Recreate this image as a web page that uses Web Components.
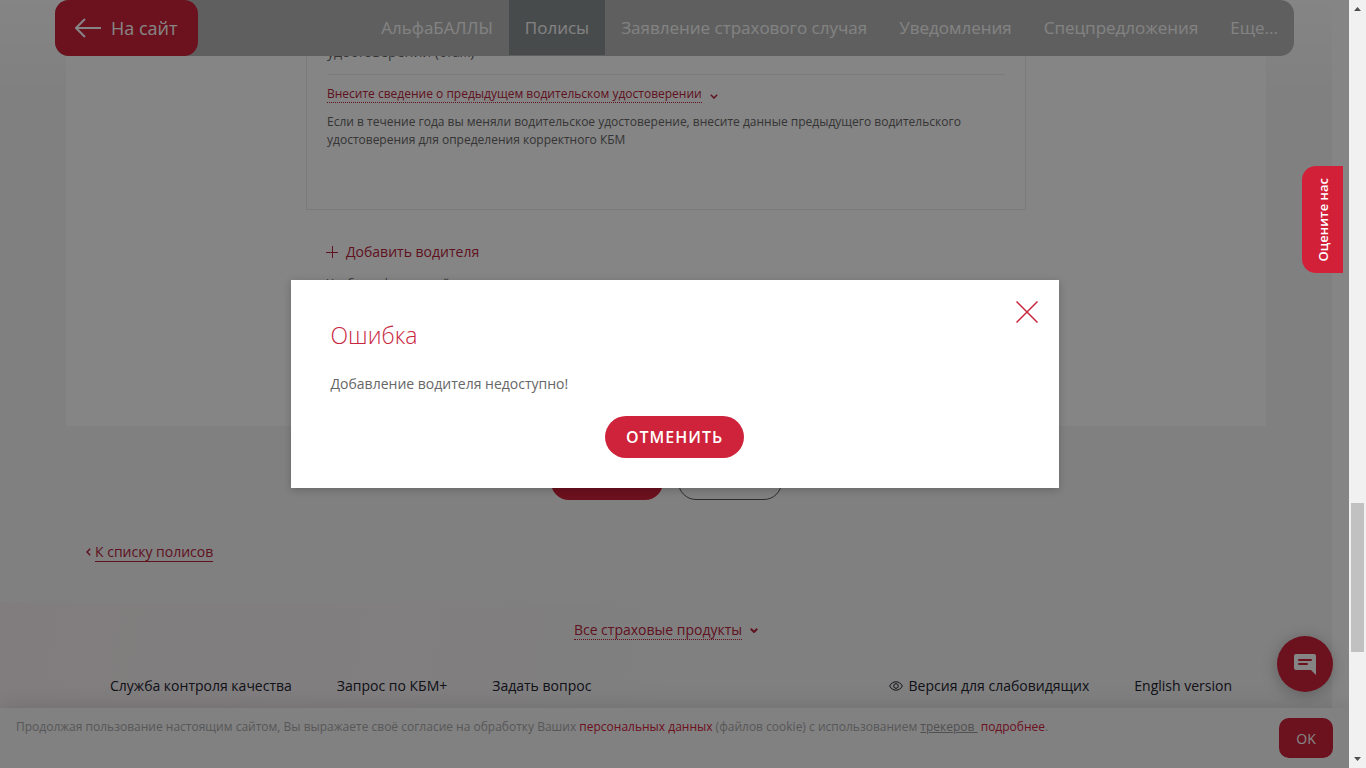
<!DOCTYPE html>
<html lang="ru">
<head>
<meta charset="utf-8">
<title>Мои полисы</title>
<style>
html, body { margin: 0; height: 100%; }
body { font-family: "Open Sans", "Noto Sans", sans-serif; font-size: 14px; color: #666; overflow: hidden;
  --brand: #d0213a; --link: #b8243c; }
</style>
</head>
<body>
<app-shell>
  <site-header slot="header">
    <nav-item>АльфаБАЛЛЫ</nav-item>
    <nav-item active>Полисы</nav-item>
    <nav-item>Заявление страхового случая</nav-item>
    <nav-item>Уведомления</nav-item>
    <nav-item>Спецпредложения</nav-item>
    <nav-item>Еще...</nav-item>
  </site-header>
  <policy-form></policy-form>
  <site-footer></site-footer>
  <cookie-bar slot="bottom"></cookie-bar>
  <chat-button slot="chat"></chat-button>
  <rate-tab slot="tab">Оцените нас</rate-tab>
  <modal-dialog slot="modal" heading="Ошибка" action="ОТМЕНИТЬ">Добавление водителя недоступно!</modal-dialog>
  <page-scrollbar slot="scroll"></page-scrollbar>
</app-shell>
<script>
const base = `<style>
:host, * { box-sizing: border-box; }
button { font: inherit; border: 0; margin: 0; padding: 0; cursor: pointer; }
a { text-decoration: none; }
svg { flex: none; }
</style>`;
const define = (name, html, setup) => customElements.define(name, class extends HTMLElement {
  constructor() {
    super();
    this.attachShadow({ mode: 'open' }).innerHTML = base + html;
  }
  connectedCallback() { if (setup) setup(this, this.shadowRoot); }
});

define('app-shell', `
<style>
:host { display: grid; grid-template-columns: minmax(0, 1fr) 17px; height: 100vh; }
.view { position: relative; overflow: hidden; background: #fff; }
.page { margin-right: 17px; min-height: 100%; background: linear-gradient(#fff, #f5f5f5 100px); }
.top { position: absolute; top: 0; left: 55px; right: 55px; }
.bottom { position: absolute; left: 0; right: 0; bottom: 0; }
.chat { position: absolute; right: 16px; bottom: 76px; }
.shade { position: absolute; inset: 0; background: rgba(0, 0, 0, .48); }
.tab { position: absolute; right: 6px; top: 166px; }
.modal { position: absolute; inset: 0; display: grid; place-items: center; pointer-events: none; }
</style>
<div class="view">
  <main class="page"><slot></slot></main>
  <div class="top"><slot name="header"></slot></div>
  <div class="bottom"><slot name="bottom"></slot></div>
  <div class="chat"><slot name="chat"></slot></div>
  <div class="shade"></div>
  <div class="modal"><slot name="modal"></slot></div>
  <div class="tab"><slot name="tab"></slot></div>
</div>
<slot name="scroll"></slot>`);

define('site-header', `
<style>
:host { display: flex; justify-content: space-between; height: 56px; border-radius: 14px; background: #b7b7b7; font-size: 17px; }
a { display: flex; align-items: center; gap: 10px; padding: 0 20px; width: 143px; border-radius: 14px; background: var(--brand); color: #fff; font-size: 18px; white-space: nowrap; }
nav { display: flex; }
</style>
<a href="#"><svg width="26" height="20" viewBox="0 0 26 20" fill="none" stroke="#fff" stroke-width="2"><path d="M10 1L1 10l9 9M1 10h25"/></svg>На сайт</a>
<nav><slot></slot></nav>`);

define('nav-item', `
<style>
:host { display: block; height: 55px; font-weight: 500; }
:host([active]) { background: #8a9193; }
a { display: flex; align-items: center; height: 100%; padding: 0 16px; color: #fafafa; white-space: nowrap; }
</style>
<a href="#"><slot></slot></a>`);

define('policy-form', `
<style>
:host { display: block; }
.panel { max-width: 1200px; height: 426px; margin: 0 auto; background: #fff; }
.card { max-width: 720px; height: 210px; margin: 0 auto; padding: 40px 20px 0; border: 1px solid #ebebeb; border-top: 0; }
.field { height: 35px; border-bottom: 1px solid #ebebeb; line-height: 24px; }
.more { display: flex; align-items: center; gap: 8px; margin-top: 10px; font-size: 12px; line-height: 17px; }
.more svg { margin-top: 4px; }
.more a { color: var(--link); border-bottom: 1px dotted; }
p { margin: 10px 0 0; font-size: 12px; line-height: 18px; }
.add { max-width: 720px; margin: 31px auto 0; padding-left: 20px; }
.add button { display: flex; align-items: center; gap: 8px; background: none; color: var(--link); line-height: 22px; }
.add p { margin-top: 12px; }
.actions { display: flex; justify-content: center; gap: 15px; margin-top: 38px; }
.actions button { width: 112px; height: 36px; border-radius: 18px; background: var(--brand); }
.actions .ghost { width: 104px; background: none; border: 1px solid #555; }
.back { display: flex; align-items: center; gap: 4px; margin: 42px auto 41px; max-width: 1160px; }
.back a { color: var(--link); border-bottom: 1px solid; line-height: 19px; }
</style>
<section class="panel">
  <div class="card">
    <div class="field">удостоверении (стаж)</div>
    <div class="more"><a href="#">Внесите сведение о предыдущем водительском удостоверении</a>
      <svg width="8" height="5" viewBox="0 0 8 5" fill="none" stroke="#b8243c" stroke-width="1.5"><path d="M.8 .8L4 4 7.200 .8"/></svg></div>
    <p>Если в течение года вы меняли водительское удостоверение, внесите данные предыдущего водительского удостоверения для определения корректного КБМ</p>
  </div>
  <div class="add">
    <button type="button"><svg width="12" height="12" viewBox="0 0 12 12" stroke="#b8243c"><path d="M0 6.500h12M6.500 0v12"/></svg>Добавить водителя</button>
    <p>Чтобы информацией</p>
  </div>
</section>
<div class="actions"><button type="button" aria-label="Далее"></button><button type="button" class="ghost" aria-label="Назад"></button></div>
<div class="back"><svg width="5" height="8" viewBox="0 0 5 8" fill="none" stroke="#b8243c" stroke-width="1.5"><path d="M4.200 .8L1 4l3.200 3.200"/></svg><a href="#">К списку полисов</a></div>`);

define('site-footer', `
<style>
:host { display: block; height: 165px; padding-top: 17px; background: linear-gradient(100deg, #f8f0f2, #f6f5f5 50%, #f5f5f5); }
.all { display: flex; justify-content: center; align-items: center; gap: 8px; }
.all a { color: var(--link); border-bottom: 1px dotted; line-height: 19px; }
.links { display: flex; align-items: center; gap: 45px; max-width: 1132px; margin: 35px auto 0; padding-left: 10px; line-height: 22px; }
.links a { display: flex; align-items: center; gap: 6px; color: #222230; white-space: nowrap; }
.right { display: flex; gap: 45px; margin-left: auto; }
</style>
<div class="all"><a href="#">Все страховые продукты</a>
  <svg width="8" height="5" viewBox="0 0 8 5" fill="none" stroke="#b8243c" stroke-width="2"><path d="M.8 .8L4 4 7.200 .8"/></svg></div>
<div class="links"><a href="#">Служба контроля качества</a><a href="#">Запрос по КБМ+</a><a href="#">Задать вопрос</a>
  <div class="right"><a href="#"><svg width="14" height="10" viewBox="0 0 14 10" fill="none" stroke="#222230"><path d="M.6 5C3.500-.6 10.500-.6 13.400 5 10.500 10.600 3.500 10.600.6 5z"/><circle cx="7" cy="5" r="2.300"/></svg>Версия для слабовидящих</a><a href="#">English version</a></div>
</div>`);

define('cookie-bar', `
<style>
:host { display: flex; justify-content: space-between; height: 60px; padding: 10px 16px; background: #f7f7f9; box-shadow: 0 0 24px rgba(0,0,0,.14); font-size: 12px; font-weight: 500; color: #a8a8a8; }
p { margin: 0; line-height: 18px; }
a { color: var(--brand); }
.plain { color: #999; text-decoration: underline; }
button { width: 54px; height: 40px; flex: none; border-radius: 10px; background: var(--brand); color: #fff; font-size: 14px; font-weight: 400; }
</style>
<p>Продолжая пользование настоящим сайтом, Вы выражаете своё согласие на обработку Ваших <a href="#">персональных данных</a> (файлов cookie) с использованием <a class="plain" href="#">трекеров&nbsp;</a> <a href="#">подробнее</a>.</p>
<button type="button">OK</button>`);

define('chat-button', `
<style>
:host { display: block; }
button { display: grid; place-items: center; width: 56px; height: 56px; border-radius: 50%; background: var(--brand); box-shadow: 0 3px 16px rgba(0,0,0,.25); }
</style>
<button type="button" aria-label="Чат"><svg width="22" height="22" viewBox="0 0 22 22"><path fill="#fff" d="M2 1h18a2 2 0 0 1 2 2v19l-5-5H2a2 2 0 0 1-2-2V3a2 2 0 0 1 2-2z"/><path stroke="#d0213a" stroke-width="2" stroke-linecap="round" d="M5 7h12M5 11h8"/></svg></button>`);

define('rate-tab', `
<style>
:host { display: block; }
button { display: flex; align-items: center; justify-content: center; width: 41px; height: 107px; border-radius: 14px 0 0 14px; background: #d22039; color: #fff; font-size: 13px; font-weight: 600; }
span { writing-mode: vertical-rl; transform: rotate(180deg); white-space: nowrap; }
</style>
<button type="button"><span><slot></slot></span></button>`);

define('modal-dialog', `
<style>
:host { display: block; position: relative; pointer-events: auto; width: 768px; max-width: 90%; padding: 40px 40px 30px; background: #fff; box-shadow: 0 2px 8px rgba(0,0,0,.2); }
h2 { margin: 0; font-size: 23px; line-height: 30px; font-weight: 300; color: #c8283f; }
p { margin: 22px 0 20px; line-height: 24px; }
.go { display: block; width: 139px; height: 42px; margin: 0 auto; border-radius: 21px; background: #ce233b; color: #fff; font-size: 16px; font-weight: 600; letter-spacing: 1px; }
.close { position: absolute; top: 21px; right: 21px; width: 22px; height: 22px; background: none; }
svg { display: block; }
</style>
<section role="dialog" aria-labelledby="t">
<h2 id="t"></h2>
<p><slot></slot></p>
<button class="go" type="button"></button>
<button class="close" type="button" aria-label="Закрыть"><svg width="22" height="22" viewBox="0 0 22 22" stroke="#c8283f" stroke-width="1.500"><path d="M.5 .5l21 21M21.500 .5l-21 21"/></svg></button>
</section>`, (el, root) => {
  root.querySelector('h2').textContent = el.getAttribute('heading');
  root.querySelector('.go').textContent = el.getAttribute('action');
});

define('page-scrollbar', `
<style>
:host { display: flex; flex-direction: column; align-items: center; height: 100%; padding: 7px 0; background: #f1f1f1; }
.thumb { width: 13px; height: 149px; margin: auto 0 105px; background: #c1c1c1; }
svg { display: block; }
</style>
<svg width="7" height="4" viewBox="0 0 7 4"><path fill="#505050" d="M0 4l3.500-4L7 4z"/></svg>
<div class="thumb"></div>
<svg width="7" height="4" viewBox="0 0 7 4"><path fill="#505050" d="M0 0l3.500 4L7 0z"/></svg>`);
</script>
</body>
</html>
